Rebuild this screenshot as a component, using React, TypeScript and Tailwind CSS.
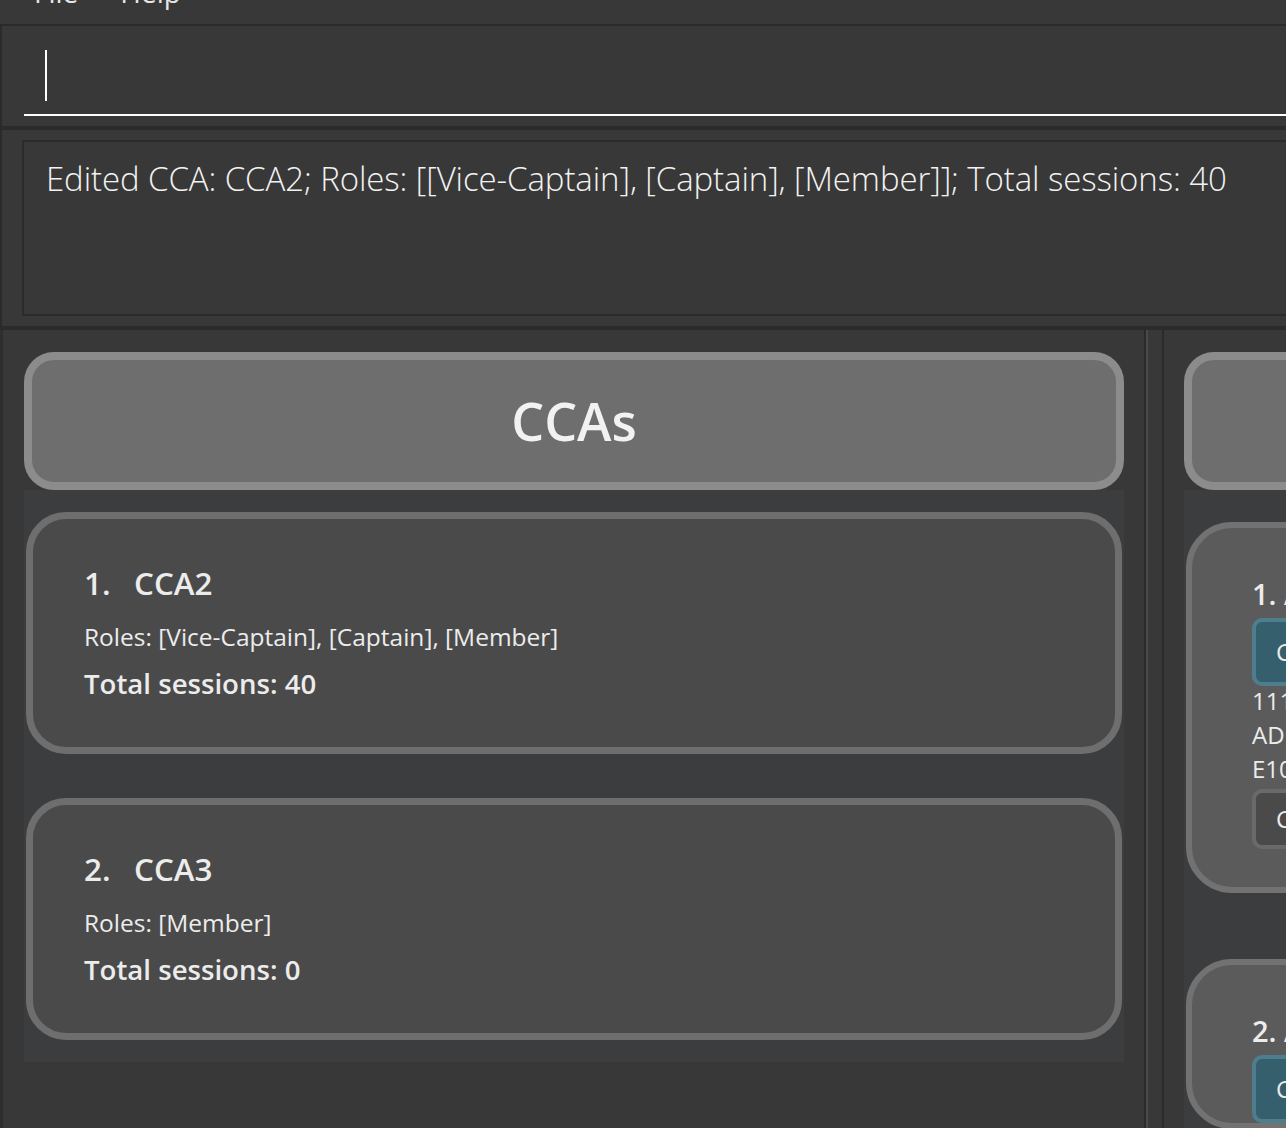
import React from "react";

const cards = [
  { idx: "1.", name: "CCA2", roles: "[Vice-Captain], [Captain], [Member]", sessions: 40 },
  { idx: "2.", name: "CCA3", roles: "[Member]", sessions: 0 },
];

function CcaCard({ idx, name, roles, sessions }: (typeof cards)[number]) {
  return (
    <div className="mx-[2px] h-[242px] shrink-0 rounded-[40px] border-[7px] border-[#6e6e6e] bg-[#4a4a4a] pl-[51px] pt-[44px] text-[#ececec]">
      <div className="flex text-[31.4px] font-semibold leading-[40px]">
        <span className="w-[50px]">{idx}</span>
        <span>{name}</span>
      </div>
      <div className="mt-[19px] text-[24.5px] leading-[30px]">Roles: {roles}</div>
      <div className="mt-[13px] text-[27.6px] font-semibold leading-[36px]">Total sessions: {sessions}</div>
    </div>
  );
}

function PersonCard({ idx, tall }: { idx: string; tall?: boolean }) {
  return (
    <div className="ml-[2px] w-[400px] shrink-0 rounded-[46px] border-[6px] border-[#727272] bg-[#5b5b5b] pl-[60px] pt-[46px] text-[#ececec]">
      <div className="text-[29px] font-semibold leading-[40px]">{idx} A</div>
      <div className="mt-[4px] flex h-[68px] w-[120px] items-center rounded-[10px] border-[4px] border-[#4e7d8e] bg-[#365f6e] pl-[20px] text-[24px]">
        C
      </div>
      {tall && (
        <>
          <div className="-mt-[2px] text-[24px] leading-[34px]">1111</div>
          <div className="text-[24px] leading-[34px]">ADD</div>
          <div className="text-[24px] leading-[34px]">E100</div>
          <div className="mt-[3px] flex h-[60px] w-[120px] items-center rounded-[10px] border-[4px] border-[#6a6a6a] bg-[#4a4a4a] pl-[20px] text-[24px]">
            C
          </div>
          <div className="h-[38px]" />
        </>
      )}
    </div>
  );
}

export default function App() {
  return (
    <div
      className="flex h-[1128px] w-[1286px] flex-col overflow-hidden bg-[#383838]"
      style={{ fontFamily: "'Open Sans', 'Noto Sans', sans-serif" }}
    >
      {/* menu bar */}
      <div className="h-[24px] shrink-0 overflow-hidden">
        <div className="-mt-[27px] flex gap-[42px] pl-[34px] text-[28px] leading-[38px] text-[#e6e6e6]">
          <span>File</span>
          <span>Help</span>
        </div>
      </div>
      <div className="h-[2px] shrink-0 bg-[#2a2a2a]" />

      {/* command box */}
      <div className="h-[100px] shrink-0 border-l-2 border-[#2b2b2b] pl-[22px] pt-[24px]">
        <div className="h-[66px] border-b-2 border-white pl-[21px]">
          <div className="h-[51px] w-[2px] bg-white" />
        </div>
      </div>
      <div className="h-[4px] shrink-0 bg-[#2b2b2b]" />

      {/* result display */}
      <div className="h-[196px] shrink-0 border-l-2 border-[#2b2b2b] pl-[20px] pt-[10px]">
        <div className="h-[176px] border-2 border-r-0 border-[#2b2b2b] pl-[22px] pt-[14px] text-[33px] font-light leading-[46px] tracking-[-0.1px] whitespace-nowrap text-[#f2f2f2]">
          Edited CCA: CCA2; Roles: [[Vice-Captain], [Captain], [Member]]; Total sessions: 40
        </div>
      </div>
      <div className="h-[4px] shrink-0 bg-[#2b2b2b]" />

      {/* lists */}
      <div className="flex min-h-0 flex-1">
        <div className="w-[1144px] shrink-0 border-l-[3px] border-[#2e2e2e] pl-[21px] pt-[22px]">
          <div className="flex h-[138px] w-[1100px] items-center justify-center rounded-[30px] border-[8px] border-[#8c8c8c] bg-[#6e6e6e] text-[52px] font-semibold text-[#f2f2f2]">
            CCAs
          </div>
          <div className="flex w-[1100px] flex-col gap-[44px] bg-[#3c3d3f] py-[22px]">
            {cards.map((c) => (
              <CcaCard key={c.idx} {...c} />
            ))}
          </div>
        </div>
        <div className="w-[2px] shrink-0 bg-[#2a2a2a]" />
        <div className="w-[2px] shrink-0 bg-[#4a4a4a]" />
        <div className="w-[14px] shrink-0" />
        <div className="w-[2px] shrink-0 bg-[#2a2a2a]" />
        <div className="min-w-0 flex-1 overflow-hidden pl-[20px] pt-[22px]">
          <div className="h-[138px] w-[600px] rounded-[30px] border-[8px] border-[#8c8c8c] bg-[#6e6e6e]" />
          <div className="flex w-[600px] flex-col gap-[66px] bg-[#3c3d3f] pt-[32px]">
            <PersonCard idx="1." tall />
            <PersonCard idx="2." />
          </div>
        </div>
      </div>
    </div>
  );
}
